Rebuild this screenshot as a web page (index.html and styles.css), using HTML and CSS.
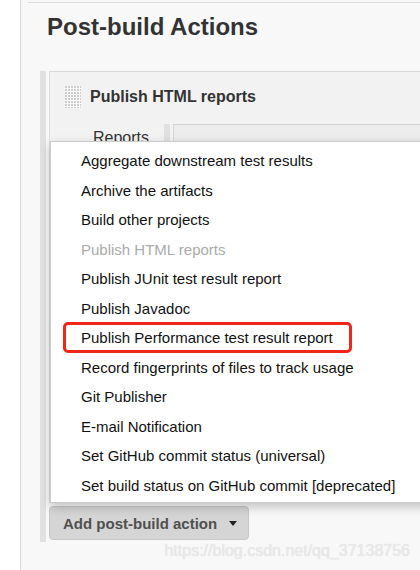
FILE: index.html
```html
<!DOCTYPE html>
<html lang="en">
<head>
  <meta charset="UTF-8">
  <title>Post-build Actions</title>
  <link rel="stylesheet" href="styles.css">
</head>
<body>
  <div class="page">
    <div class="rule"></div>
    <h1>Post-build Actions</h1>

    <div class="section">
      <div class="panel">
        <div class="panel-head">
          <svg class="handle" width="16" height="22" viewBox="0 0 16 22">
            <defs>
              <pattern id="dots" width="3" height="3" patternUnits="userSpaceOnUse">
                <rect width="2" height="2" fill="#cdcdcd"/>
              </pattern>
            </defs>
            <rect width="16" height="22" fill="#fbfbfb"/>
            <rect width="16" height="22" fill="url(#dots)"/>
          </svg>
          <h2>Publish HTML reports</h2>
        </div>
        <div class="field">
          <div class="label">Reports</div>
          <div class="bar"></div>
          <div class="box"></div>
        </div>

        <ul class="menu">
          <li>Aggregate downstream test results</li>
          <li>Archive the artifacts</li>
          <li>Build other projects</li>
          <li class="disabled">Publish HTML reports</li>
          <li>Publish JUnit test result report</li>
          <li>Publish Javadoc</li>
          <li class="marked">Publish Performance test result report</li>
          <li>Record fingerprints of files to track usage</li>
          <li>Git Publisher</li>
          <li>E-mail Notification</li>
          <li>Set GitHub commit status (universal)</li>
          <li>Set build status on GitHub commit [deprecated]</li>
        </ul>
      </div>

      <button class="add">Add post-build action <span class="caret"></span></button>
    </div>

    <div class="watermark">https://blog.csdn.net/qq_37138756</div>
  </div>
</body>
</html>
```

FILE: styles.css
```css
html, body {
  margin: 0;
  padding: 0;
  height: 100%;
  overflow: hidden;
}
body {
  background: #fff;
  font-family: "Liberation Sans", Arial, sans-serif;
  color: #333;
}
.page {
  position: relative;
  margin-left: 20px;
  border-left: 1px solid #d6d6d6;
  background: #f8f8f8;
  min-height: 570px;
  padding: 2px 0 0 7px;
  box-sizing: border-box;
}
.rule {
  border-top: 1px solid #dddddd;
}
h1 {
  margin: 10px 0 0 0;
  padding-left: 19px;
  font-size: 24px;
  line-height: 28px;
  font-weight: bold;
  color: #333;
}
.section {
  margin: 30px 0 0 12px;
  border-left: 6px solid #e1e1e1;
  padding: 0 0 2px 3px;
}
.panel {
  position: relative;
  border-top: 1px solid #d9d9d9;
  border-left: 1px solid #dcdcdc;
  background: #f2f2f2;
}
.panel-head {
  display: flex;
  align-items: center;
  gap: 9px;
  padding: 14px 0 16px 15px;
}
.handle {
  display: block;
}
.panel-head h2 {
  margin: 0;
  font-size: 16px;
  line-height: 18px;
  font-weight: bold;
  color: #333;
}
.field {
  display: flex;
}
.label {
  width: 99px;
  padding: 5px 15px 0 0;
  text-align: right;
  font-size: 16px;
  line-height: 18px;
  color: #333;
}
.bar {
  width: 6px;
  background: #e0e0e0;
  margin-right: 3px;
}
.box {
  flex: 1;
  min-height: 378px;
  border-top: 1px solid #d2d2d2;
  border-left: 1px solid #d6d6d6;
  background: #ececec;
}
.menu {
  position: absolute;
  top: 69px;
  left: 0;
  right: -20px;
  margin: 0;
  padding: 4px 0 2px 30px;
  list-style: none;
  background: #fff;
  border: 1px solid #cccccc;
  box-shadow: 0 4px 10px rgba(0,0,0,0.22);
}
.menu li {
  position: relative;
  font-size: 15px;
  line-height: 29.5px;
  color: #111;
  white-space: nowrap;
}
.menu li.disabled {
  color: #aaaaaa;
}
.menu li.marked::after {
  content: "";
  position: absolute;
  left: -18px;
  top: -1px;
  width: 283px;
  height: 25px;
  border: 3px solid #f0261b;
  border-radius: 5px;
}
.add {
  display: inline-flex;
  align-items: center;
  gap: 12px;
  margin-top: 3px;
  height: 34px;
  padding: 0 11px 0 13px;
  border: 1px solid #c8c8c8;
  border-radius: 4px;
  background: #d5d5d5;
  font-family: "Liberation Sans", Arial, sans-serif;
  font-size: 15px;
  font-weight: bold;
  color: #505050;
}
.caret {
  width: 0;
  height: 0;
  border-left: 4px solid transparent;
  border-right: 4px solid transparent;
  border-top: 5px solid #222;
}
.watermark {
  position: absolute;
  right: 10px;
  bottom: 10px;
  font-size: 16px;
  line-height: 18px;
  color: #e9e9e9;
  text-shadow: 0 0 1px rgba(0,0,0,0.12);
}
```
